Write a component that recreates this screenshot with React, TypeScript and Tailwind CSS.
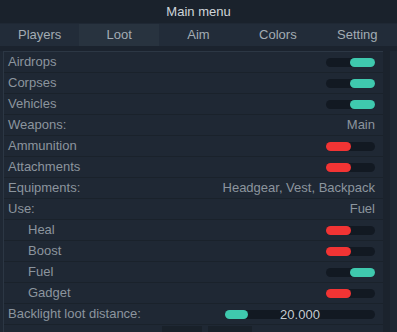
import React from 'react'

const tabs = ['Players', 'Loot', 'Aim', 'Colors', 'Setting']

type Item =
  | { kind: 'toggle'; label: string; on: boolean; indent?: boolean }
  | { kind: 'value'; label: string; value: string }
  | { kind: 'slider'; label: string; value: string; pct: number }

const items: Item[] = [
  { kind: 'toggle', label: 'Airdrops', on: true },
  { kind: 'toggle', label: 'Corpses', on: true },
  { kind: 'toggle', label: 'Vehicles', on: true },
  { kind: 'value', label: 'Weapons:', value: 'Main' },
  { kind: 'toggle', label: 'Ammunition', on: false },
  { kind: 'toggle', label: 'Attachments', on: false },
  { kind: 'value', label: 'Equipments:', value: 'Headgear, Vest, Backpack' },
  { kind: 'value', label: 'Use:', value: 'Fuel' },
  { kind: 'toggle', label: 'Heal', on: false, indent: true },
  { kind: 'toggle', label: 'Boost', on: false, indent: true },
  { kind: 'toggle', label: 'Fuel', on: true, indent: true },
  { kind: 'toggle', label: 'Gadget', on: false, indent: true },
  { kind: 'slider', label: 'Backlight loot distance:', value: '20.000', pct: 15 },
]

// ── Toggle ──────────────────────────────────────────────────────────────────
function Toggle({ on }: { on: boolean }) {
  return (
    <div className={`w-[49px] h-[9px] rounded-full bg-[#121922] flex ${on ? 'justify-end' : 'justify-start'}`}>
      <div className={`w-[25px] h-full rounded-full ${on ? 'bg-[#3fc9ae]' : 'bg-[#f23434]'}`} />
    </div>
  )
}

// ── Slider ──────────────────────────────────────────────────────────────────
function Slider({ value, pct }: { value: string; pct: number }) {
  return (
    <div className="relative w-[150px] h-[9px] rounded-full bg-[#121922]">
      <div className="h-full rounded-full bg-[#3fc9ae]" style={{ width: `${pct}%` }} />
      <span className="absolute inset-0 flex items-center justify-center text-[13px] text-[#c4cbd1] leading-none">
        {value}
      </span>
    </div>
  )
}

export default function App() {
  return (
    <div
      className="w-[397px] h-[332px] bg-[#1f2834] overflow-hidden flex flex-col"
      style={{ fontFamily: "'Liberation Sans', Arial, sans-serif" }}
    >
      {/* Header */}
      <div className="h-[23px] bg-[#1a222c] flex items-center justify-center text-[13px] text-[#cfd5da]">
        Main menu
      </div>

      {/* Tabs */}
      <div className="mt-[1px] h-[22px] bg-[#222c39] grid grid-cols-5">
        {tabs.map((t) => (
          <div
            key={t}
            className={`flex items-center justify-center text-[13px] text-[#a3acb4] ${t === 'Loot' ? 'bg-[#28333f]' : ''}`}
          >
            {t}
          </div>
        ))}
      </div>
      <div className="h-[5px] bg-[#1b232e]" />

      {/* List */}
      <div className="flex flex-1 min-h-0">
        <div className="flex-1 ml-[3px] border-l border-t border-[#2c3744] flex flex-col">
          {items.map((it) => (
            <div
              key={it.label + it.kind}
              className="h-[21px] shrink-0 flex items-center justify-between pl-[4px] pr-[8px] border-b border-[#1a222b] text-[13px] text-[#8c959e]"
            >
              <span className={it.kind === 'toggle' && it.indent ? 'pl-[20px]' : ''}>{it.label}</span>
              {it.kind === 'toggle' && <Toggle on={it.on} />}
              {it.kind === 'value' && <span>{it.value}</span>}
              {it.kind === 'slider' && <Slider value={it.value} pct={it.pct} />}
            </div>
          ))}
          {/* partly visible buttons below the list */}
          <div className="flex gap-[6px] pl-[158px] pt-[1px]">
            <div className="w-[40px] h-[8px] bg-[#19212a]" />
            <div className="w-[44px] h-[8px] bg-[#19212a]" />
          </div>
        </div>
        {/* Scrollbar */}
        <div className="w-[7px] bg-[#1b232d] mr-[7px]" />
      </div>
    </div>
  )
}
